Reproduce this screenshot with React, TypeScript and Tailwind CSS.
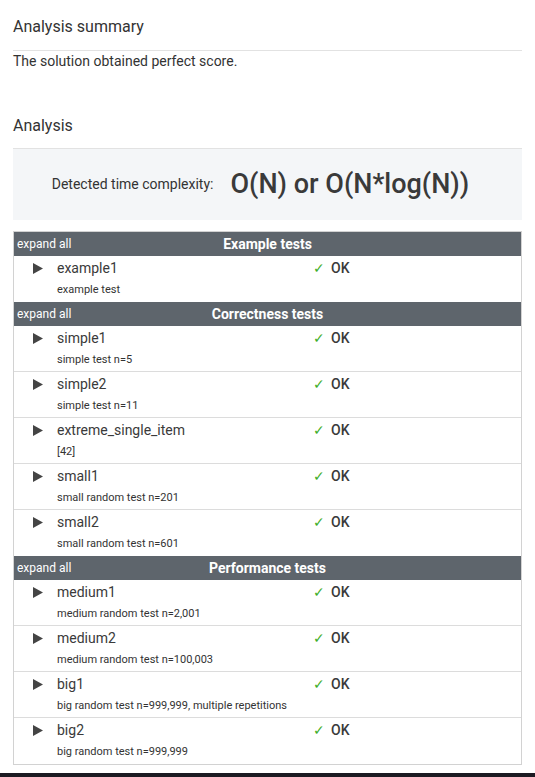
import React from "react";

type Test = { name: string; desc: string };
type Group = { title: string; tests: Test[] };

const groups: Group[] = [
  { title: "Example tests", tests: [{ name: "example1", desc: "example test" }] },
  {
    title: "Correctness tests",
    tests: [
      { name: "simple1", desc: "simple test n=5" },
      { name: "simple2", desc: "simple test n=11" },
      { name: "extreme_single_item", desc: "[42]" },
      { name: "small1", desc: "small random test n=201" },
      { name: "small2", desc: "small random test n=601" },
    ],
  },
  {
    title: "Performance tests",
    tests: [
      { name: "medium1", desc: "medium random test n=2,001" },
      { name: "medium2", desc: "medium random test n=100,003" },
      { name: "big1", desc: "big random test n=999,999, multiple repetitions" },
      { name: "big2", desc: "big random test n=999,999" },
    ],
  },
];

function TestRow({ test, last }: { test: Test; last: boolean }) {
  return (
    <div className={`flex h-[46px] ${last ? "" : "border-b border-[#dcdcdc]"}`}>
      <div className="w-[43px] shrink-0 pl-[19px] pt-[6px]">
        <svg width="10" height="11" viewBox="0 0 10 11" className="mt-[1px]">
          <polygon points="0,0 10,5.5 0,11" fill="#444" />
        </svg>
      </div>
      <div className="w-[256px] shrink-0 pt-[2px]">
        <div className="text-[14px] leading-[20px] text-[#3a3a3a]">{test.name}</div>
        <div className="mt-[4px] text-[11px] leading-[16px] text-[#333]">{test.desc}</div>
      </div>
      <div className="pt-[2px] text-[14px] leading-[20px]">
        <span className="text-[#3fae29]">✓</span>
        <span className="ml-[6px] font-medium text-[#3a3a3a]">OK</span>
      </div>
    </div>
  );
}

export default function App() {
  return (
    <div
      className="flex h-[777px] flex-col bg-white"
      style={{ fontFamily: "Roboto, 'Liberation Sans', sans-serif" }}
    >
      <div className="flex-1 px-[13px]">
        <h2 className="border-b border-[#e2e2e2] pt-[15px] pb-[11px] text-[16px] leading-[24px] font-normal text-[#333]">
          Analysis summary
        </h2>
        <p className="text-[14px] leading-[20px] text-[#333]">The solution obtained perfect score.</p>

        <h2 className="mt-[43px] border-b border-[#e2e2e2] pb-[10px] text-[16px] leading-[24px] font-normal text-[#333]">
          Analysis
        </h2>
        <div className="flex h-[71px] items-center justify-center gap-[17px] bg-[#f4f6f8] pr-[14px]">
          <span className="text-[14px] text-[#333]">Detected time complexity:</span>
          <span className="text-[27px] font-medium text-[#3a3a3a]">O(N) or O(N*log(N))</span>
        </div>

        <div className="mt-[11px] border border-[#d2d2d2]">
          {groups.map((g) => (
            <div key={g.title}>
              <div className="grid h-[24px] grid-cols-[1fr_auto_1fr] items-center bg-[#5e656c] text-white">
                <span className="pl-[3px] text-[12px]">expand all</span>
                <span className="text-[14px] font-bold">{g.title}</span>
                <span />
              </div>
              {g.tests.map((t, i) => (
                <TestRow key={t.name} test={t} last={i === g.tests.length - 1} />
              ))}
            </div>
          ))}
        </div>
      </div>
      <div className="h-[4px] bg-[#1c1a22]" />
    </div>
  );
}
